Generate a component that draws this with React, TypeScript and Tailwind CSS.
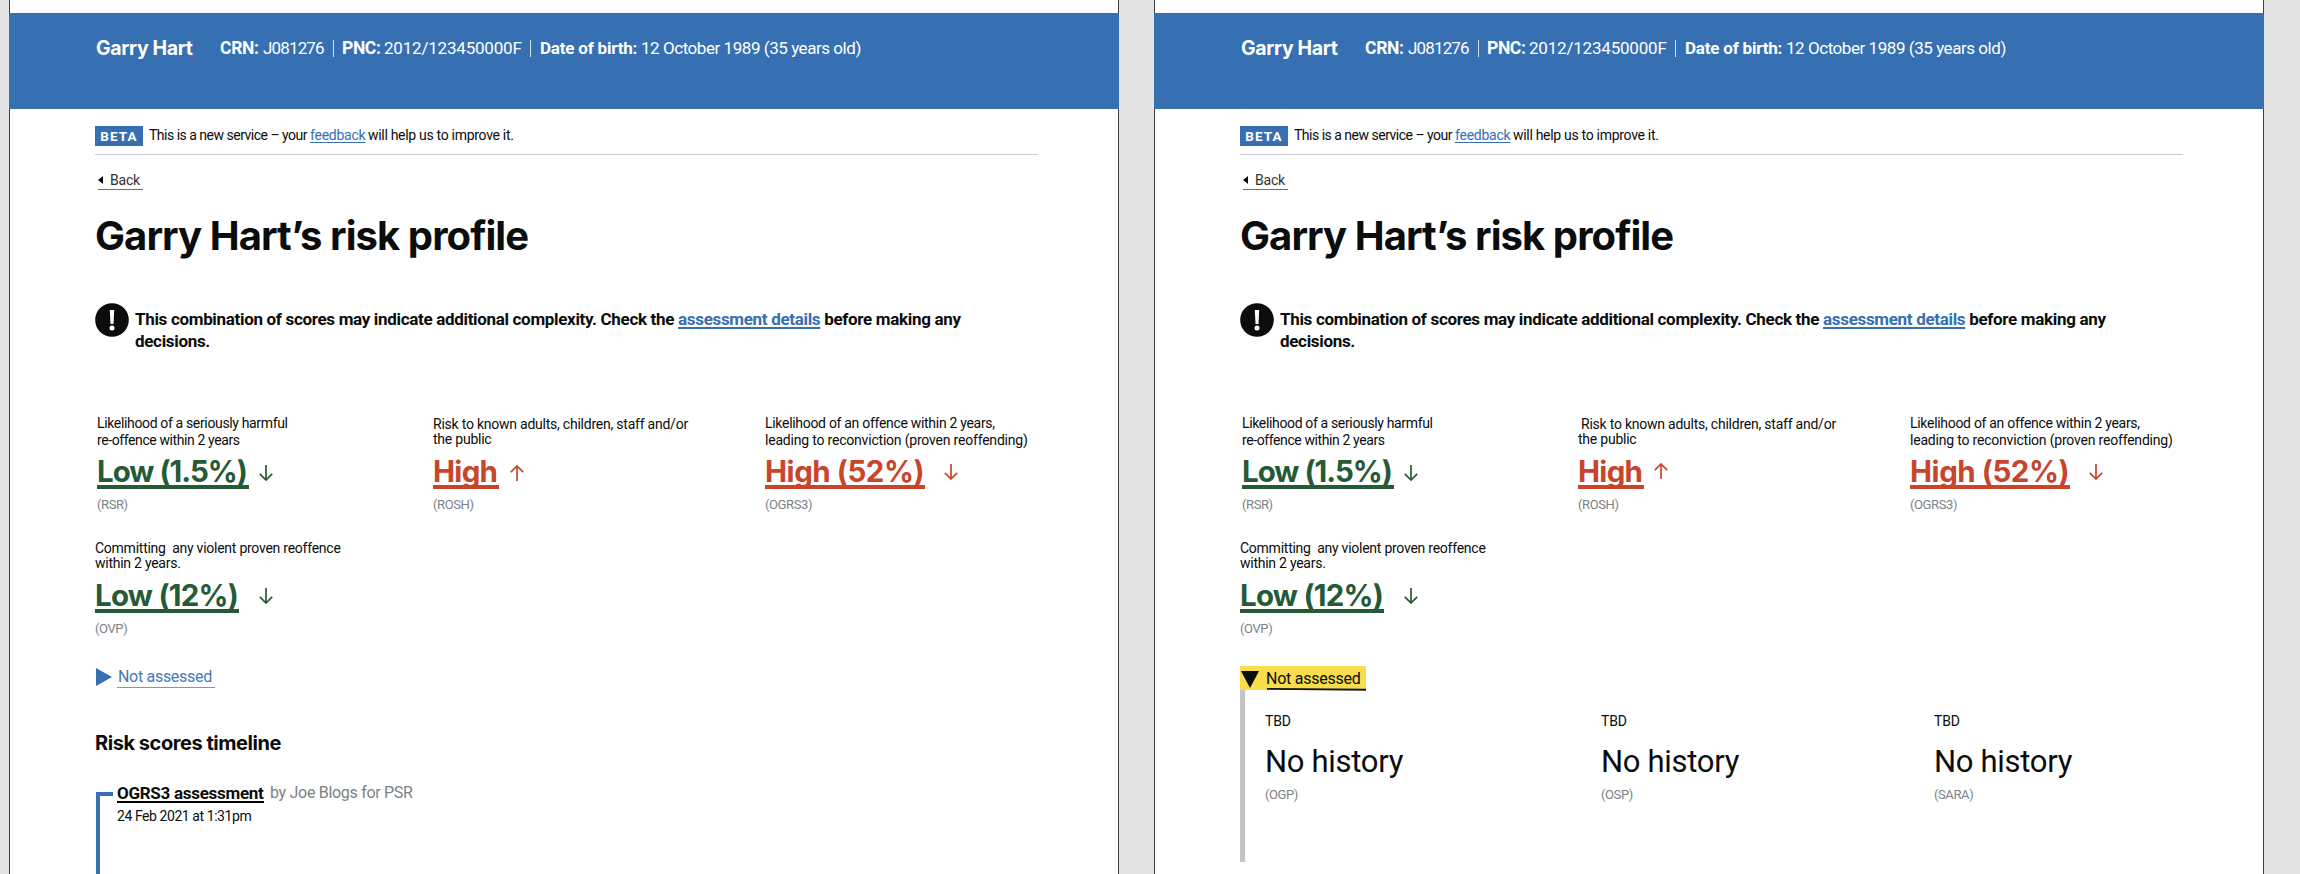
import React from "react";

type Tone = "low" | "high";

const toneText: Record<Tone, string> = {
  low: "text-[#265a36]",
  high: "text-[#c8452c]",
};

const toneBorder: Record<Tone, string> = {
  low: "border-[#265a36]",
  high: "border-[#c8452c]",
};

function Arrow({ up = false, className }: { up?: boolean; className: string }) {
  return (
    <svg
      viewBox="0 0 14 16"
      className={`h-4 w-[14px] shrink-0 ${className}`}
      fill="none"
      stroke="currentColor"
      strokeWidth="1.7"
    >
      {up ? <path d="M7 16V1M0.8 7.2L7 1l6.2 6.2" /> : <path d="M7 0v15M0.8 8.8L7 15l6.2-6.2" />}
    </svg>
  );
}

function Score({
  tone,
  value,
  valueClass,
  arrowClass,
  up,
  code,
}: {
  tone: Tone;
  value: string;
  valueClass: string;
  arrowClass: string;
  up?: boolean;
  code: string;
}) {
  return (
    <>
      <div className={`flex items-start ${toneText[tone]}`}>
        <a
          className={`block h-[36px] whitespace-nowrap border-b-4 font-['Inter',sans-serif] text-[29.5px] leading-[37px] font-bold ${toneBorder[tone]} ${valueClass}`}
        >
          {value}
        </a>
        <Arrow up={up} className={arrowClass} />
      </div>
      <div className="mt-[6px] text-[13px] leading-5 tracking-[-0.4px] text-[#7c8287]">{code}</div>
    </>
  );
}

function PersonHeader() {
  return (
    <header className="h-24 bg-[#366fb2] pt-[23px] pl-[87px] text-white">
      <div className="flex h-6 items-center text-[17px] leading-6 whitespace-nowrap">
        <span className="w-[124px] font-['Inter',sans-serif] text-[19.5px] font-bold tracking-[-0.35px]">
          Garry Hart
        </span>
        <b className="w-[43px] text-[17.5px] tracking-[-0.3px]">CRN:</b>
        <span className="w-[70px] tracking-[-0.85px]">J081276</span>
        <span className="mr-2 h-[17px] w-px bg-white/80" />
        <b className="w-[42px] text-[17.5px] tracking-[-0.4px]">PNC:</b>
        <span className="w-[146px] tracking-[-0.2px]">2012/123450000F</span>
        <span className="mr-[9px] h-[17px] w-px bg-white/80" />
        <b className="w-[101px] tracking-[-0.2px]">Date of birth:</b>
        <span className="tracking-[-0.45px]">12 October 1989 (35 years old)</span>
      </div>
    </header>
  );
}

function Intro() {
  return (
    <>
      <div className="ml-[85px] h-[46px] w-[943px] border-b border-[#cccdcf] pt-4">
        <div className="flex items-start text-[14px] leading-5 whitespace-nowrap">
          <strong className="mt-px mr-[6px] h-5 w-12 bg-[#366fb2] text-center text-[13.5px] leading-[20px] tracking-[1.1px] text-white">
            BETA
          </strong>
          <span className="w-[161px] tracking-[-0.5px]">This is a new service – your</span>
          <a className="mr-[3px] w-[55px] tracking-[-0.25px] text-[#366fb2] underline decoration-1 underline-offset-2 [text-decoration-skip-ink:none]">
            feedback
          </a>
          <span className="tracking-[-0.3px]">will help us to improve it.</span>
        </div>
      </div>
      <a className="mt-[15px] ml-[88px] flex h-5 w-[45px] items-center gap-[7px] border-b border-[#6b6d6e] text-[14px] leading-5 tracking-[-0.2px] text-[#303232]">
        <svg viewBox="0 0 5 8" className="h-2 w-[5px] fill-[#0b0c0c]">
          <path d="M5 0v8L0 4z" />
        </svg>
        Back
      </a>
      <h1 className="mt-[22px] ml-[85px] font-['Inter',sans-serif] text-[40px] leading-[47px] font-bold tracking-[-0.93px]">
        Garry Hart’s risk profile
      </h1>
      <div className="mt-[44px] ml-[86px] flex h-[49px]">
        <svg viewBox="0 0 34 34" className="-ml-px size-[34px] shrink-0">
          <circle cx="17" cy="17" r="16.8" fill="#0b0c0c" />
          <path d="M14.8 7h4.4l-.7 14h-3z" fill="#fff" />
          <circle cx="17" cy="25" r="2.5" fill="#fff" />
        </svg>
        <p className="mt-[5px] ml-[6px] text-[17px] leading-[22px] font-bold tracking-[-0.32px] whitespace-nowrap">
          This combination of scores may indicate additional complexity. Check the{" "}
          <a className="text-[#366fb2] underline decoration-2 underline-offset-2 [text-decoration-skip-ink:none]">
            assessment details
          </a>{" "}
          before making any
          <br />
          decisions.
        </p>
      </div>
    </>
  );
}

function Scores({ shifted }: { shifted: boolean }) {
  return (
    <>
      <div className="mt-[63px] ml-[87px] flex h-[126px] text-[14px] leading-[17px] whitespace-nowrap">
        <div className="w-[336px]">
          <div className="mb-1 h-[34px] tracking-[-0.35px]">
            Likelihood of a seriously harmful
            <br />
            <span className="tracking-[-0.4px]">re-offence within 2 years</span>
          </div>
          <Score
            tone="low"
            value="Low (1.5%)"
            valueClass="w-[152px] tracking-[-1px]"
            arrowClass="ml-[10px] mt-3"
            code="(RSR)"
          />
        </div>
        <div className="w-[332px]">
          <div className="mb-1 h-[34px] pt-[2px] leading-[15px] tracking-[-0.23px]">
            <span className={shifted ? "pl-[3px]" : ""}>Risk to known adults, children, staff and/or</span>
            <br />
            the public
          </div>
          <Score
            tone="high"
            value="High"
            valueClass="w-[66px] tracking-[-0.7px]"
            arrowClass={shifted ? "ml-[10px] mt-[10px]" : "ml-[11px] mt-3"}
            up
            code="(ROSH)"
          />
        </div>
        <div>
          <div className="mb-1 h-[34px] tracking-[-0.2px]">
            <span className="tracking-[-0.3px]">Likelihood of an offence within 2 years,</span>
            <br />
            leading to reconviction (proven reoffending)
          </div>
          <Score
            tone="high"
            value="High (52%)"
            valueClass="w-[160px] tracking-[-0.45px]"
            arrowClass="ml-[19px] mt-[11px]"
            code="(OGRS3)"
          />
        </div>
      </div>
      <div className="ml-[85px] h-[123px] text-[14px] leading-[15px] whitespace-nowrap">
        <div className="mb-[6px] h-[30px] tracking-[-0.25px]">
          Committing&nbsp; any violent proven reoffence
          <br />
          within 2 years.
        </div>
        <Score
          tone="low"
          value="Low (12%)"
          valueClass="w-[144px] tracking-[-0.75px]"
          arrowClass="ml-5 mt-[11px]"
          code="(OVP)"
        />
      </div>
    </>
  );
}

function Timeline() {
  return (
    <>
      <div className="ml-[86px] flex h-6 items-start text-[#3f7abc]">
        <svg viewBox="0 0 16 18" className="mt-1 mr-[5px] h-[18px] w-4 fill-[#366fb2]">
          <path d="M0 0l16 9L0 18z" />
        </svg>
        <a className="h-6 w-[98px] border-b border-[#6c9acb] pl-px text-[16px] leading-[25px] tracking-[-0.3px]">
          Not assessed
        </a>
      </div>
      <h2 className="mt-[41px] ml-[85px] font-['Inter',sans-serif] text-[20px] leading-7 font-bold tracking-[-0.45px]">
        Risk scores timeline
      </h2>
      <div className="mt-[35px] ml-[86px] h-[82px] border-l-4 border-[#366fb2]">
        <div className="flex items-start">
          <div className="mr-1 h-1 w-[13px] bg-[#366fb2]" />
          <div className="-mt-[11px] whitespace-nowrap">
            <div className="flex text-[17px] leading-6">
              <a className="h-[22px] w-[147px] border-b-2 border-black font-bold tracking-[-0.28px]">
                OGRS3 assessment
              </a>
              <span className="ml-[6px] text-[16px] tracking-[-0.3px] text-[#7c8287]">
                by Joe Blogs for PSR
              </span>
            </div>
            <div className="mt-px text-[14px] leading-5 tracking-[-0.43px]">24 Feb 2021 at 1:31pm</div>
          </div>
        </div>
      </div>
    </>
  );
}

const unassessed = [
  { code: "(OGP)", width: "w-[336px]" },
  { code: "(OSP)", width: "w-[333px]" },
  { code: "(SARA)", width: "w-[160px]" },
];

function NotAssessedPanel() {
  return (
    <div className="ml-[85px]">
      <div className="mt-0.5 flex h-6 w-[126px] items-start bg-[#f9dd4a]">
        <svg viewBox="0 0 18 17" className="mt-[5px] ml-px h-[17px] w-[18px] fill-[#0b0c0c]">
          <path d="M0 0h18L9 17z" />
        </svg>
        <div className="ml-[7px] w-[100px]">
          <a className="block h-[22px] text-[16px] leading-[25px] tracking-[-0.25px]">Not assessed</a>
          <svg viewBox="0 0 99 3" className="ml-px h-[3px] w-[99px] overflow-visible fill-[#15160f]">
            <path d="M0 0L99 0.8V2.8L0 1.7z" />
          </svg>
        </div>
      </div>
      <div className="flex h-[172px] border-l-[5px] border-[#c4c4c4] pt-[21px] pl-5">
        {unassessed.map((item) => (
          <div key={item.code} className={item.width}>
            <div className="text-[14px] leading-5 tracking-[-0.2px]">TBD</div>
            <div className="mt-[11px] text-[31px] leading-[40px] tracking-[-0.3px] text-[#0b0c0c]">
              No history
            </div>
            <div className="mt-[3px] text-[13px] leading-5 tracking-[-0.4px] text-[#7c8287]">{item.code}</div>
          </div>
        ))}
      </div>
    </div>
  );
}

function Screen({ expanded = false }: { expanded?: boolean }) {
  return (
    <div className="flex h-[874px] w-[1110px] shrink-0 flex-col bg-white">
      <div className="h-[13px] shrink-0 border-x border-[#3c3d3d]" />
      <PersonHeader />
      <main className="flex-1 border-x border-[#3c3d3d]">
        <Intro />
        <Scores shifted={expanded} />
        {expanded ? <NotAssessedPanel /> : <Timeline />}
      </main>
    </div>
  );
}

export default function App() {
  return (
    <div className="flex h-[874px] w-[2300px] gap-[35px] overflow-hidden bg-[#e4e4e4] pl-[9px] font-['Roboto',sans-serif] text-[#0b0c0c]">
      <Screen />
      <Screen expanded />
    </div>
  );
}
